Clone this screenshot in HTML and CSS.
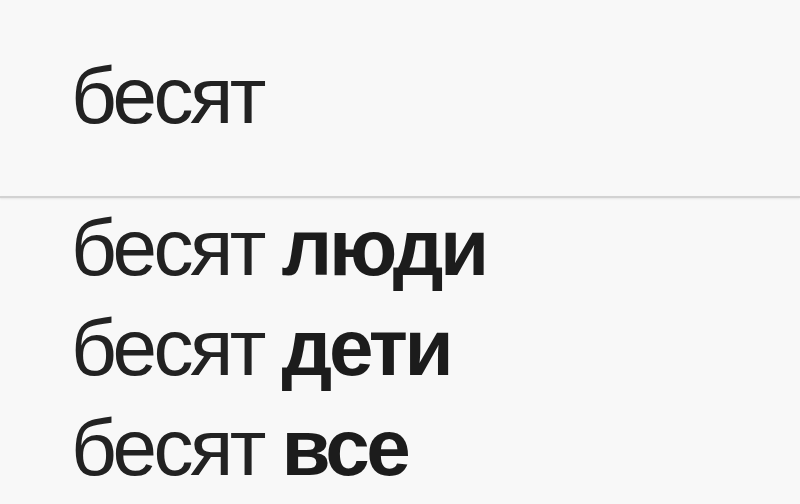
FILE: index.html
```html
<!DOCTYPE html>
<html lang="ru">
<head>
<meta charset="utf-8">
<title>бесят</title>
<link rel="stylesheet" href="styles.css">
</head>
<body>
  <div class="search">
    <div class="query">бесят</div>
    <div class="divider"></div>
    <ul class="suggestions">
      <li class="item">бесят <b>люди</b></li>
      <li class="item">бесят <b>дети</b></li>
      <li class="item">бесят <b>все</b></li>
    </ul>
  </div>
</body>
</html>
```

FILE: styles.css
```css
html, body {
  margin: 0;
  padding: 0;
  background: #f8f8f8;
}

.search {
  width: 800px;
  height: 504px;
  overflow: hidden;
  font-family: "Liberation Sans", Arial, sans-serif;
  font-size: 80px;
  line-height: 100px;
  letter-spacing: -3.5px;
  color: #222;
}

.query {
  height: 150px;
  padding: 46px 0 0 71px;
}

.divider {
  height: 2px;
  background: #d2d2d2;
  box-shadow: 0 1px 2px rgba(0, 0, 0, 0.08);
}

.suggestions {
  list-style: none;
  margin: 0;
  padding: 0;
}

.item {
  height: 100px;
  padding-left: 71px;
  white-space: nowrap;
}

.item b {
  font-weight: 700;
  color: #1c1c1c;
}
```
